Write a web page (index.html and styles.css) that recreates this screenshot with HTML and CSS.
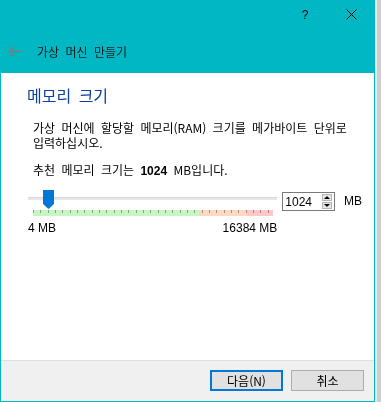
FILE: index.html
```html
<!DOCTYPE html>
<html lang="ko">
  <head>
    <meta charset="UTF-8" />
    <title>가상 머신 만들기</title>
    <link rel="stylesheet" href="styles.css">
  </head>
  <body>
    <div class="window">
      <div class="titlebar">
        <div class="caption-btn help">?</div>
        <div class="caption-btn">
          <svg width="11" height="11" viewBox="0 0 11 11">
            <path d="M0.5 0.5L10.5 10.5M10.5 0.5L0.5 10.5" stroke="#000" stroke-width="1" fill="none"/>
          </svg>
        </div>
      </div>

      <div class="header">
        <svg class="back" width="13" height="11" viewBox="0 0 13 11">
          <path d="M1 5.5H13M6 0.5L1 5.5L6 10.5" stroke="#7c7c7c" stroke-width="1.4" fill="none"/>
        </svg>
        <span class="header-title">가상 머신 만들기</span>
      </div>

      <div class="content">
        <h1 class="page-title">메모리 크기</h1>
        <p class="desc">가상 머신에 할당할 메모리(RAM) 크기를 메가바이트 단위로 입력하십시오.</p>
        <p class="desc recommend">추천 메모리 크기는 <b>1024</b> MB입니다.</p>

        <div class="memory-row">
          <div class="slider">
            <div class="track"></div>
            <svg class="thumb" style="left: 15px" width="11" height="19" viewBox="0 0 11 19">
              <path d="M0 0H11V14L5.5 19L0 14Z" fill="#0078d7"/>
            </svg>
            <div class="ruler">
              <div class="zone zone-ok"></div>
              <div class="zone zone-warn"></div>
              <div class="zone zone-bad"></div>
            </div>
            <div class="scale">
              <span>4 MB</span>
              <span>16384 MB</span>
            </div>
          </div>

          <div class="spinbox">
            <span class="spin-value">1024</span>
            <div class="spin-buttons">
              <div class="spin-btn"><i class="arrow-up"></i></div>
              <div class="spin-btn"><i class="arrow-down"></i></div>
            </div>
          </div>
          <span class="unit">MB</span>
        </div>
      </div>

      <div class="footer">
        <button class="btn btn-default">다음(N)</button>
        <button class="btn">취소</button>
      </div>
    </div>
    <div class="backdrop"></div>
  </body>
</html>
```

FILE: styles.css
```css
:root {
  --accent: #00b7c3;
  --blue: #0078d7;
  --face: #f0f0f0;
}

html,
body {
  margin: 0;
  padding: 0;
  width: 381px;
  height: 402px;
  overflow: hidden;
}

body {
  display: flex;
  background-color: #dadada;
  font-family: "Noto Sans CJK KR", "Liberation Sans", sans-serif;
  font-size: 12px;
  color: #000;
  word-spacing: 3px;
}

.window {
  width: 375px;
  height: 402px;
  box-sizing: border-box;
  padding: 0 1px 1px 1px;
  background-color: var(--accent);
  display: flex;
  flex-direction: column;
}

.titlebar {
  height: 29px;
  display: flex;
  justify-content: flex-end;
}

.caption-btn {
  width: 46px;
  display: flex;
  align-items: center;
  justify-content: center;
}

.help {
  font-family: "Liberation Sans", sans-serif;
  font-size: 12px;
}

.header {
  height: 44px;
  display: flex;
  align-items: center;
  padding-left: 7px;
}

.back {
  margin-right: 16px;
}

.header-title {
  color: #1b1b1b;
  font-size: 12px;
}

.content {
  flex: 1;
  background-color: #fff;
  padding: 12px 12px 0 26px;
}

.page-title {
  margin: 0;
  font-size: 16px;
  font-weight: normal;
  line-height: 20px;
  color: #0d3fa3;
}

.desc {
  margin: 15px 0 0 6px;
  line-height: 15px;
}

.recommend {
  margin-top: 12px;
}

.recommend b {
  font-family: "Liberation Sans", sans-serif;
}

.memory-row {
  display: flex;
  align-items: flex-start;
  margin-top: 11px;
  word-spacing: 0;
}

.slider {
  position: relative;
  width: 251px;
  margin-left: 1px;
}

.track {
  margin-top: 7px;
  height: 3px;
  background-color: #e7e7e7;
  border-top: 1px solid #d8d8d8;
  box-sizing: border-box;
}

.thumb {
  position: absolute;
  top: 0;
}

.ruler {
  display: flex;
  width: 240px;
  height: 6px;
  margin: 10px 0 0 5px;
  background-image: repeating-linear-gradient(90deg, #a8a8a8 0, #a8a8a8 1px, transparent 1px, transparent 7.33px);
  background-size: 100% 3px;
  background-repeat: no-repeat;
}

.zone {
  height: 100%;
  mix-blend-mode: multiply;
}

.zone-ok {
  width: 166px;
  background-color: #c6f7c3;
}

.zone-warn {
  width: 48px;
  background-color: #ffd8c2;
}

.zone-bad {
  width: 26px;
  background-color: #ffc6c6;
}

.scale {
  display: flex;
  justify-content: space-between;
  margin-top: 5px;
  font-family: "Liberation Sans", sans-serif;
  line-height: 14px;
}

.spinbox {
  display: flex;
  align-items: center;
  justify-content: space-between;
  width: 53px;
  height: 19px;
  margin: 2px 0 0 5px;
  box-sizing: border-box;
  border: 1px solid #7a7a7a;
  background-color: #fff;
  padding: 0 2px;
}

.spin-value {
  font-family: "Liberation Sans", sans-serif;
  font-size: 12px;
}

.spin-buttons {
  display: flex;
  flex-direction: column;
  gap: 1px;
}

.spin-btn {
  width: 10px;
  height: 7px;
  box-sizing: border-box;
  border: 1px solid #b5b5b5;
  background-color: #e6e6e6;
  display: flex;
  align-items: center;
  justify-content: center;
}

.arrow-up,
.arrow-down {
  width: 0;
  height: 0;
  border-left: 3px solid transparent;
  border-right: 3px solid transparent;
}

.arrow-up {
  border-bottom: 3px solid #000;
}

.arrow-down {
  border-top: 3px solid #000;
}

.unit {
  margin-left: 9px;
  line-height: 23px;
  font-family: "Liberation Sans", sans-serif;
  font-size: 12px;
}

.footer {
  height: 41px;
  box-sizing: border-box;
  border-top: 1px solid #dfdfdf;
  background-color: var(--face);
  display: flex;
  justify-content: flex-end;
  gap: 8px;
  padding: 9px 10px 0 0;
  word-spacing: 0;
}

.btn {
  width: 73px;
  height: 21px;
  box-sizing: border-box;
  border: 1px solid #adadad;
  background-color: #e1e1e1;
  font-family: "Noto Sans CJK KR", "Liberation Sans", sans-serif;
  font-size: 12px;
  color: #000;
  padding: 0;
}

.btn-default {
  border: 2px solid var(--blue);
}

.backdrop {
  flex: 1;
  border-left: 2px solid #e9e9e9;
  background-color: #cfcfcf;
}
```
